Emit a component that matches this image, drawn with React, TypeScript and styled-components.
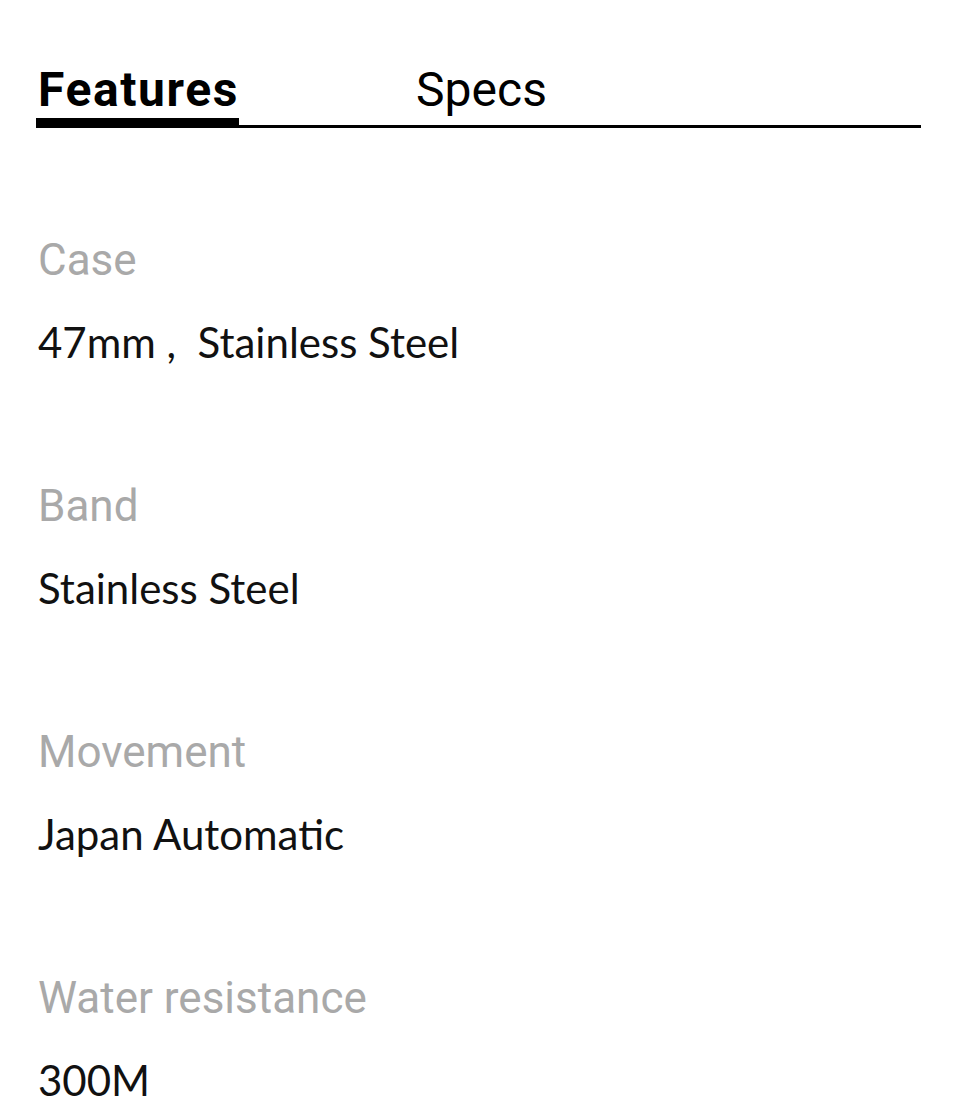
import styled, { createGlobalStyle } from "styled-components";

const GlobalStyle = createGlobalStyle`
  body {
    margin: 0;
    background: #ffffff;
  }
`;

const StyledPage = styled.div`
  padding: 66px 39px 0 36px;
`;

const StyledTabList = styled.div`
  display: flex;
  gap: 175px;
  border-bottom: 3px solid #000000;
`;

const StyledTab = styled.div<{ $isActive: boolean }>`
  font-family: Roboto, "Liberation Sans", sans-serif;
  font-size: 48px;
  line-height: 48px;
  font-weight: ${({ $isActive }) => ($isActive ? 700 : 400)};
  letter-spacing: ${({ $isActive }) => ($isActive ? "1.6px" : "0")};
  color: #000000;
  padding: 0 0 4px 2px;
  border-bottom: 7px solid ${({ $isActive }) => ($isActive ? "#000000" : "transparent")};
`;

const StyledSpecList = styled.div`
  display: flex;
  flex-direction: column;
  gap: 121px;
  padding-top: 110px;
`;

const StyledSpec = styled.div`
  display: flex;
  flex-direction: column;
  gap: 39px;
  padding-left: 2px;
`;

const StyledLabel = styled.div`
  font-family: Roboto, "Liberation Sans", sans-serif;
  font-size: 44px;
  line-height: 44px;
  color: #a9a9a9;
`;

const StyledValue = styled.div`
  font-family: Lato, "Open Sans", sans-serif;
  font-size: 42px;
  line-height: 42px;
  color: #111111;
  white-space: pre;
`;

const specs = [
  { label: "Case", value: "47mm ,  Stainless Steel" },
  { label: "Band", value: "Stainless Steel" },
  { label: "Movement", value: "Japan Automatic" },
  { label: "Water resistance", value: "300M" },
];

const App = () => {
  return (
    <>
      <GlobalStyle />
      <StyledPage>
        <StyledTabList>
          <StyledTab $isActive>Features</StyledTab>
          <StyledTab $isActive={false}>Specs</StyledTab>
        </StyledTabList>
        <StyledSpecList>
          {specs.map((spec) => (
            <StyledSpec key={spec.label}>
              <StyledLabel>{spec.label}</StyledLabel>
              <StyledValue>{spec.value}</StyledValue>
            </StyledSpec>
          ))}
        </StyledSpecList>
      </StyledPage>
    </>
  );
};

export default App;
